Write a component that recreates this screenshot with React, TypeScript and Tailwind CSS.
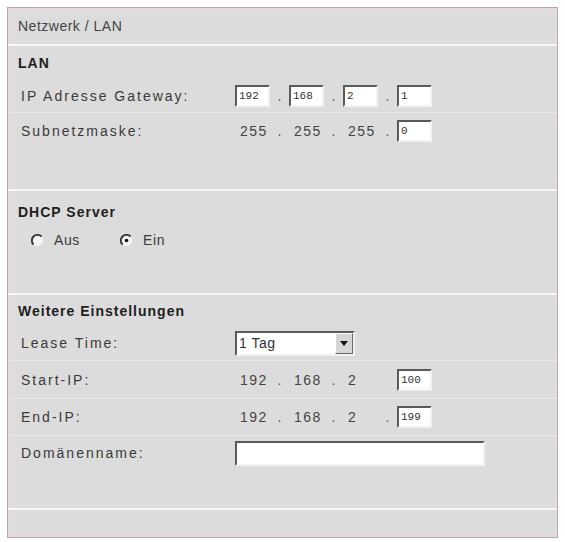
import React from "react";

const font = { fontFamily: '"Liberation Sans", Arial, sans-serif' };

// Classic sunken input box with a value
const Box = ({ value, w = "w-[35px]" }: { value: string; w?: string }) => (
    <div
        className={`${w} h-[22px] bg-white border-2 border-t-[#5a5a5a] border-l-[#5a5a5a] border-r-[#f2f2f2] border-b-[#f2f2f2] flex items-center pl-[2px] text-[11px] text-[#333] font-['Liberation_Mono',monospace]`}
    >
        {value}
    </div>
);

const Dot = ({ show = true }: { show?: boolean }) => (
    <span className="flex-1 text-center text-[14px] text-[#555]">{show ? "." : ""}</span>
);

const Cell = ({ children, dot = true }: { children: React.ReactNode; dot?: boolean }) => (
    <div className="flex items-center w-[54px]">
        <div className="w-[35px]">{children}</div>
        <Dot show={dot} />
    </div>
);

const Num = ({ v }: { v: string }) => (
    <span className="pl-[5px] text-[14px] tracking-[1.5px] text-[#444]">{v}</span>
);

const Label = ({ children }: { children: React.ReactNode }) => (
    <div className="w-[214px] text-[14px] tracking-[2px] text-[#3a3a3a]">{children}</div>
);

const Radio = ({ checked }: { checked?: boolean }) => (
    <svg width="13" height="13" viewBox="0 0 13 13">
        <circle cx="6.5" cy="6.5" r="5.5" fill="#f4f4f4" />
        <path d="M10.5 2.5 A5.5 5.5 0 0 0 2.5 10.5" stroke="#3a3a3a" strokeWidth="2" fill="none" />
        {checked && <circle cx="6.5" cy="6.5" r="1.8" fill="#111" />}
    </svg>
);

const Heading = ({ children }: { children: React.ReactNode }) => (
    <div className="pl-[10px] leading-[18px] text-[14px] font-bold tracking-[1px] text-[#1e1e1e]">{children}</div>
);

export default function App() {
    return (
        <div className="w-[565px] h-[542px] bg-white pt-[7px] pl-[7px]" style={font}>
            <div className="w-[551px] border border-[#b9a7ae] shadow-[inset_0_0_0_1px_#f1d6de] bg-[#dcdcdc] flex flex-col">
                {/* title */}
                <div className="h-[38px] flex items-center pl-[10px] text-[14px] tracking-[0.5px] text-[#444] border-b-2 border-[#f6f6f6]">
                    Netzwerk / LAN
                </div>

                {/* LAN */}
                <div className="h-[145px] flex flex-col border-b-2 border-[#f6f6f6]">
                    <div className="pt-[8px]">
                        <Heading>LAN</Heading>
                    </div>
                    <div className="flex items-center pl-[13px] pt-[13px] pb-[5px] border-b border-[#e8e8e8]">
                        <Label>IP Adresse Gateway:</Label>
                        <div className="flex items-center">
                            <Cell><Box value="192" /></Cell>
                            <Cell><Box value="168" /></Cell>
                            <Cell><Box value="2" /></Cell>
                            <Box value="1" />
                        </div>
                    </div>
                    <div className="flex items-center pl-[13px] pt-[6px]">
                        <Label>Subnetzmaske:</Label>
                        <div className="flex items-center">
                            <Cell><Num v="255" /></Cell>
                            <Cell><Num v="255" /></Cell>
                            <Cell><Num v="255" /></Cell>
                            <Box value="0" />
                        </div>
                    </div>
                </div>

                {/* DHCP */}
                <div className="h-[104px] flex flex-col border-b-2 border-[#f6f6f6]">
                    <div className="pt-[12px]">
                        <Heading>DHCP Server</Heading>
                    </div>
                    <div className="mt-[10px] h-[18px] flex items-center pl-[23px] text-[14px] tracking-[0.6px] text-[#3a3a3a]">
                        <Radio />
                        <span className="ml-[10px] w-[66px]">Aus</span>
                        <Radio checked />
                        <span className="ml-[10px]">Ein</span>
                    </div>
                </div>

                {/* Weitere Einstellungen */}
                <div className="h-[215px] flex flex-col border-b-2 border-[#f6f6f6]">
                    <div className="pt-[7px]">
                        <Heading>Weitere Einstellungen</Heading>
                    </div>
                    <div className="flex items-center pl-[13px] pt-[11px] pb-[4px] border-b border-[#e8e8e8]">
                        <Label>Lease Time:</Label>
                        <div className="w-[120px] h-[25px] bg-white border-2 border-t-[#5a5a5a] border-l-[#5a5a5a] border-r-[#f2f2f2] border-b-[#f2f2f2] flex items-center">
                            <span className="flex-1 pl-[2px] text-[14px] tracking-[0.5px] text-[#333]">1 Tag</span>
                            <div className="w-[18px] h-full bg-[#d8d6d2] border border-t-white border-l-white border-r-[#6a6a6a] border-b-[#6a6a6a] flex items-center justify-center">
                                <svg width="8" height="5" viewBox="0 0 8 5">
                                    <path d="M0 0 H8 L4 5 Z" fill="#111" />
                                </svg>
                            </div>
                        </div>
                    </div>
                    <div className="flex items-center pl-[13px] pt-[7px] pb-[6px] border-b border-[#e8e8e8]">
                        <Label>Start-IP:</Label>
                        <div className="flex items-center">
                            <Cell><Num v="192" /></Cell>
                            <Cell><Num v="168" /></Cell>
                            <Cell dot={false}><Num v="2" /></Cell>
                            <Box value="100" />
                        </div>
                    </div>
                    <div className="flex items-center pl-[13px] pt-[6px] pb-[6px] border-b border-[#e8e8e8]">
                        <Label>End-IP:</Label>
                        <div className="flex items-center">
                            <Cell><Num v="192" /></Cell>
                            <Cell><Num v="168" /></Cell>
                            <Cell><Num v="2" /></Cell>
                            <Box value="199" />
                        </div>
                    </div>
                    <div className="flex items-center pl-[13px] pt-[5px]">
                        <Label>Domänenname:</Label>
                        <div className="w-[250px] h-[25px] bg-white border-2 border-t-[#5a5a5a] border-l-[#5a5a5a] border-r-[#f2f2f2] border-b-[#f2f2f2]" />
                    </div>
                </div>

                {/* bottom bar */}
                <div className="h-[27px]" />
            </div>
        </div>
    );
}
